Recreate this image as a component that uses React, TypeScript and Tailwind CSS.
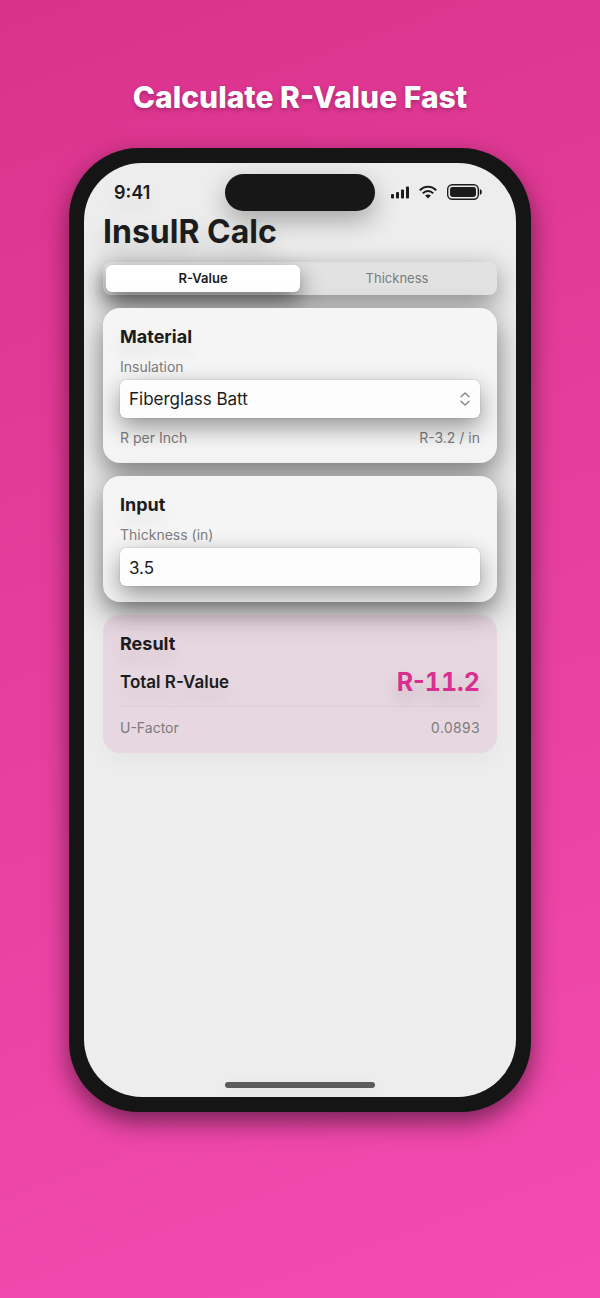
import { useState } from "react";
import type { ReactNode } from "react";

const materials = [
  { name: "Fiberglass Batt", perInch: 3.2 },
  { name: "Cellulose", perInch: 3.7 },
  { name: "Mineral Wool", perInch: 4.2 },
];

const softText = "[text-shadow:0_10px_20px_rgba(0,0,0,0.14)]";

function StatusBar() {
  return (
    <div className="grid h-[37px] grid-cols-[1fr_150px_1fr] items-center">
      <span className={`pl-[30px] text-lg font-semibold ${softText}`}>9:41</span>
      <div className="h-[37px] rounded-full bg-[#171717] shadow-[0_10px_26px_rgba(0,0,0,0.3)]" />
      <div className="flex items-center justify-end gap-[10px] pr-[34px] pb-[2px]">
        <svg width="18" height="14" viewBox="0 0 18 14" fill="currentColor" aria-hidden="true">
          <rect x="0" y="9" width="3" height="4.500" rx="1" />
          <rect x="5" y="7" width="3" height="6.500" rx="1" />
          <rect x="10" y="4.500" width="3" height="9" rx="1" />
          <rect x="15" y="1.500" width="3" height="12" rx="1" />
        </svg>
        <svg width="18" height="14" viewBox="0 0 18 14" fill="none" stroke="currentColor" strokeWidth="2" aria-hidden="true">
          <path d="M.8 5.300C5.200.4 12.800.4 17.200 5.300" />
          <path d="M3.800 8.300C6.600 5.200 11.400 5.200 14.200 8.300" />
          <path d="M9 13.400 6.100 10.600C7.700 9.100 10.300 9.100 11.900 10.600Z" fill="currentColor" stroke="none" />
        </svg>
        <svg width="35" height="16" viewBox="0 0 35 16" fill="none" aria-hidden="true">
          <rect x=".7" y=".7" width="30.600" height="14.600" rx="4.500" stroke="currentColor" strokeWidth="1.400" />
          <rect x="3" y="3" width="26" height="10" rx="2.400" fill="currentColor" />
          <path d="M32.800 5C35.600 6 35.600 10 32.800 11Z" fill="currentColor" />
        </svg>
      </div>
    </div>
  );
}

function Card({ title, result = false, children }: { title: string; result?: boolean; children: ReactNode }) {
  const surface = result
    ? "bg-[#b83c82]/12 shadow-[0_8px_20px_rgba(0,0,0,0.03)]"
    : "bg-[#f5f5f5] shadow-[0_10px_28px_rgba(0,0,0,0.5)]";
  return (
    <section className={`rounded-[17px] px-[17px] pt-[17px] pb-[15px] ${surface}`}>
      <h2 className={`text-[18px] leading-6 font-bold ${softText}`}>{title}</h2>
      {children}
    </section>
  );
}

const fieldStyle =
  "block h-[38px] w-full appearance-none rounded-md bg-[#fdfdfd] px-[9px] pt-[2px] text-[17px] outline-none shadow-[0_9px_24px_rgba(0,0,0,0.4),0_0_2px_rgba(0,0,0,0.2)]";

export default function App() {
  const [mode, setMode] = useState("R-Value");
  const [material, setMaterial] = useState(materials[0].name);
  const [amount, setAmount] = useState("3.5");

  const perInch = materials.find((m) => m.name === material)?.perInch ?? 0;
  const n = Number(amount) || 0;
  const byThickness = mode === "R-Value";
  const total = byThickness ? n * perInch : n / perInch;
  const rValue = byThickness ? total : n;

  return (
    <main className="flex min-h-screen flex-col bg-linear-160 from-[#da328c] to-[#f34bb1] px-[69px] pt-[79px] pb-[186px] font-['Inter',sans-serif] text-[#1c1c1d]">
      <h1 className="text-center text-[30px] leading-9 font-extrabold whitespace-nowrap text-white [text-shadow:0_2px_4px_rgba(0,0,0,0.25)]">
        Calculate R-Value Fast
      </h1>

      <div className="mt-[33px] flex grow flex-col rounded-[70px] bg-[#151515] p-[15px] shadow-[0_10px_24px_rgba(0,0,0,0.5)]">
        <div className="flex grow flex-col overflow-hidden rounded-[58px] bg-[#ededed] pt-[11px] pb-[9px]">
          <StatusBar />

          <div className="flex grow flex-col px-[19px]">
            <h2 className="text-[32px] leading-[42px] font-bold [text-shadow:0_12px_24px_rgba(0,0,0,0.18)]">InsulR Calc</h2>

            <div className="mt-[9px] grid grid-cols-2 rounded-lg bg-[#e2e2e2] p-[3px] shadow-[0_8px_26px_rgba(0,0,0,0.42)]">
              {["R-Value", "Thickness"].map((name) => (
                <button
                  key={name}
                  type="button"
                  aria-pressed={mode === name}
                  onClick={() => setMode(name)}
                  className={
                    mode === name
                      ? "h-[27px] rounded-md bg-white text-[13px] font-semibold shadow-[0_9px_22px_rgba(0,0,0,0.5)]"
                      : "h-[27px] rounded-md text-[13px] text-[#7c7c7e]"
                  }
                >
                  {name}
                </button>
              ))}
            </div>

            <div className="mt-[13px] flex flex-col gap-[13px]">
              <Card title="Material">
                <label htmlFor="material" className="mt-2 block text-sm leading-5 text-[#7c7c7e]">
                  Insulation
                </label>
                <div className="relative mt-[3px]">
                  <select id="material" value={material} onChange={(e) => setMaterial(e.target.value)} className={fieldStyle}>
                    {materials.map((m) => (
                      <option key={m.name}>{m.name}</option>
                    ))}
                  </select>
                  <svg
                    className="pointer-events-none absolute inset-y-0 right-[10px] my-auto text-[#808082]"
                    width="10"
                    height="14"
                    viewBox="0 0 10 14"
                    fill="none"
                    stroke="currentColor"
                    strokeWidth="1.300"
                    strokeLinecap="round"
                    strokeLinejoin="round"
                    aria-hidden="true"
                  >
                    <path d="M1 4.700 5 1 9 4.700M1 9.300 5 13 9 9.300" />
                  </svg>
                </div>
                <div className="mt-[10px] flex justify-between text-sm leading-5 text-[#7c7c7e]">
                  <span>R per Inch</span>
                  <span>R-{perInch} / in</span>
                </div>
              </Card>

              <Card title="Input">
                <label htmlFor="amount" className="mt-2 block text-sm leading-5 text-[#7c7c7e]">
                  {byThickness ? "Thickness (in)" : "R-Value"}
                </label>
                <div className="mt-[3px] pb-px">
                  <input
                    id="amount"
                    inputMode="decimal"
                    value={amount}
                    onChange={(e) => setAmount(e.target.value)}
                    className={fieldStyle}
                  />
                </div>
              </Card>

              <Card title="Result" result>
                <div className="mt-[10px] flex items-center justify-between">
                  <span className={`text-[17px] leading-8 font-semibold ${softText}`}>
                    {byThickness ? "Total R-Value" : "Thickness"}
                  </span>
                  <output
                    htmlFor="material amount"
                    className="text-[25px] leading-8 font-bold text-[#d9308f] [text-shadow:0_10px_18px_rgba(0,0,0,0.18)]"
                  >
                    {byThickness && "R-"}
                    <span className="tabular-nums">{total.toFixed(1)}</span>
                    {!byThickness && " in"}
                  </output>
                </div>
                <div className="mt-2 border-t border-black/3 pt-[11px]">
                  <div className="flex justify-between text-sm leading-5 text-[#7c7c7e]">
                    <span>U-Factor</span>
                    <span className="tabular-nums">{rValue > 0 ? (1 / rValue).toFixed(4) : "–"}</span>
                  </div>
                </div>
              </Card>
            </div>
          </div>

          <div className="mx-auto h-[6px] w-[150px] rounded-full bg-[#5b5b5b] shadow-[0_2px_14px_rgba(0,0,0,0.06)]" />
        </div>
      </div>
    </main>
  );
}
